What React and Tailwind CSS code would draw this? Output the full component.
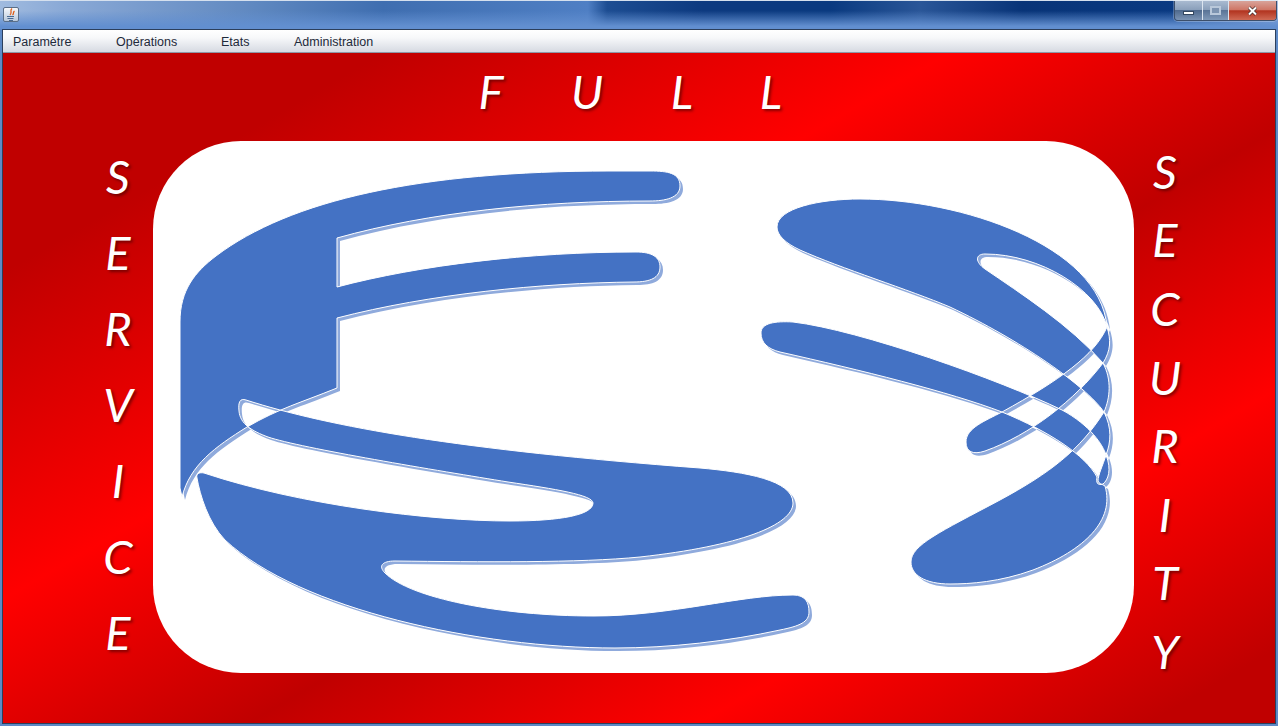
// Java Swing window: aero title bar, menu bar and the red home panel with the logo
const MENU = [
  { label: "Paramètre", width: "w-[103px]" },
  { label: "Opérations", width: "w-[105px]" },
  { label: "Etats", width: "w-[73px]" },
  { label: "Administration", width: "w-auto" },
]

const LEFT_WORD = ["S", "E", "R", "V", "I", "C", "E"]
const RIGHT_WORD = ["S", "E", "C", "U", "R", "I", "T", "Y"]

// F and the lower swoosh share one path, where they overlap even-odd leaves the small white loop
const LEFT_MARK =
  "M182 497L180 488L180 322C180 290 195 272 216 256C290 200 420 171 610 171L650 171C668 171 680 173 680 186C680 198 665 201 650 201C540 201 430 212 337 238L337 287C420 265 530 252 636 252C652 252 660 257 660 267C660 278 650 282 634 282C540 283 430 294 337 318L337 388C300 403 280 408 247 427C215 447 190 465 182 497Z" +
  "M246 400C330 427 460 450 700 468C745 472 793 480 793 503C793 525 740 546 640 557C580 563 480 562 395 561C382 561 378 566 385 573C410 598 500 616 594 616C670 616 740 595 793 595C806 595 809 603 809 612C809 622 800 626 780 630C730 641 670 648 615 648C480 648 300 610 225 540C208 522 200 495 197 478C196 474 199 472 204 473C300 505 430 521 510 521C560 521 593 515 593 503C593 495 555 489 508 482C440 471 300 448 268 437C252 431 240 424 239 411C238 402 240 398 246 400Z"

const RIGHT_MARK =
  "M777 227C777 208 820 199 860 199C960 199 1100 245 1107 327C1098 290 1040 254 985 254C975 254 975 262 985 269C1020 293 1070 325 1103 363C1112 380 1110 398 1104 412C1085 385 1020 340 950 307C910 290 840 268 800 250C785 243 777 235 777 227Z" +
  "M1107 327C1095 355 1060 380 1002 412C985 421 966 428 966 442C966 452 973 455 985 451C1030 435 1075 400 1103 363C1111 350 1111 340 1107 327Z" +
  "M761 333C761 323 775 321 793 322C860 330 1000 380 1062 410C1090 425 1103 445 1106 455C1112 470 1108 480 1103 484C1097 486 1096 482 1097 477C1085 455 1050 432 1002 412C950 392 860 370 780 352C768 349 761 343 761 333Z" +
  "M911 562C911 545 940 532 1000 500C1050 473 1080 450 1104 412C1112 428 1111 442 1106 455C1103 465 1098 475 1098 481C1099 484 1102 484 1105 486C1115 520 1085 550 1033 570C1000 582 970 584 950 584C925 584 911 575 911 562Z"

function Mark({ d }) {
  return (
    <>
      <path d={d} fill="#8faadc" fillRule="evenodd" transform="translate(3 3)" />
      <path d={d} fill="#4472c4" fillRule="evenodd" stroke="#ffffff" strokeWidth="1" />
    </>
  )
}

function Letter({ children, className }) {
  return (
    <span className={`flex items-center justify-center text-[47px] leading-none italic text-white [text-shadow:2px_2px_3px_rgba(60,0,0,0.6)] ${className}`}>
      {children}
    </span>
  )
}

export default function App() {
  return (
    <div className="flex h-[726px] w-[1278px] flex-col overflow-hidden bg-[#5d89c6] font-['Liberation_Sans',sans-serif]">
      {/* title bar */}
      <div className="flex h-[29px] shrink-0 items-start justify-between border-t border-[#d5e0ee] bg-[linear-gradient(180deg,rgba(98,143,208,0)_35%,#628fd0_90%),linear-gradient(90deg,#a0bbdf_0%,#8aa9d6_5%,#5f88c0_20%,#3f6eb0_30%,#4f7fc4_46%,#1d4d92_47.5%,#0d3a80_55%,#0a3a80_65%,#2a5698_72%,#083478_80%,#0a3a82_92%,#8faad8_100%)]">
        <div className="ml-[3px] mt-[6px] flex h-[15px] w-[16px] items-center justify-center rounded-[2px] border border-[#5b6f88] bg-[linear-gradient(180deg,#f6f8fb,#b9c9dc)]">
          <svg viewBox="0 0 14 13" className="h-[13px] w-[14px]">
            <path d="M8 0.5C5 3 9 4 6 7M10.5 3C8.5 4.5 10.5 5.5 8.5 7" fill="none" stroke="#e0601a" strokeWidth="1.3" />
            <path d="M3 8.5h7M3.5 10.5h6M5 12.5h4" stroke="#4a6a92" strokeWidth="1" />
          </svg>
        </div>
        <div className="mr-[1px] flex h-[20px] overflow-hidden rounded-b-[4px] border border-t-0 border-[#3c4f6b] shadow-[0_0_0_1px_rgba(255,255,255,0.25)]">
          <div className="flex w-[28px] items-center justify-center border-r border-[#dbe4ef] bg-[linear-gradient(180deg,#a9bad0_0%,#8ba0bb_45%,#4f6a8e_50%,#7b93b3_100%)]">
            <span className="mt-[4px] h-[4px] w-[11px] border border-[#33465f] bg-white" />
          </div>
          <div className="flex w-[26px] items-center justify-center border-r border-[#dbe4ef] bg-[linear-gradient(180deg,#a9bad0_0%,#8ba0bb_45%,#5a7497_50%,#8099b8_100%)]">
            <span className="h-[9px] w-[11px] border-2 border-[#b9c8da] bg-[#7d94b1]" />
          </div>
          <div className="flex w-[47px] items-center justify-center bg-[linear-gradient(180deg,#d8a39a_0%,#cf7767_45%,#b23420_52%,#cf6a55_100%)]">
            <svg viewBox="0 0 11 10" className="h-[10px] w-[11px]">
              <path d="M2 1.5 9 8.5M9 1.5 2 8.5" stroke="#3f2a2a" strokeWidth="3.4" />
              <path d="M2 1.5 9 8.5M9 1.5 2 8.5" stroke="#ffffff" strokeWidth="2" />
            </svg>
          </div>
        </div>
      </div>

      {/* window content */}
      <div className="mx-[2px] mb-[2px] flex min-h-0 flex-1 flex-col border border-[#2c3f5c]">
        <nav className="flex h-[23px] shrink-0 items-center border-b border-[#8e97a6] bg-[linear-gradient(180deg,#ffffff_0%,#f7f8fa_35%,#d6dae2_100%)] pl-[10px] pt-[2px] text-[12.5px] text-[#1e2a3a]">
          {MENU.map((item) => (
            <span key={item.label} className={item.width}>
              {item.label}
            </span>
          ))}
        </nav>

        <main className="flex min-h-0 flex-1 flex-col bg-[linear-gradient(150deg,#c00000_0px,#c00000_190px,#ff0000_473px,#c00000_703px,#ff0000_928px,#c00000_1153px)] font-['Lato',sans-serif]">
          <div className="flex h-[88px] shrink-0 items-center pb-[12px] pl-[441px]">
            <Letter className="w-[94px]">F</Letter>
            <Letter className="w-[98px]">U</Letter>
            <Letter className="w-[92px]">L</Letter>
            <Letter className="w-[86px]">L</Letter>
          </div>

          <div className="flex">
            <div className="-mt-[3px] flex w-[150px] shrink-0 flex-col pl-[100px]">
              {LEFT_WORD.map((l, i) => (
                <Letter key={i} className="h-[76px] w-[30px]">
                  {l}
                </Letter>
              ))}
            </div>

            <div className="h-[532px] w-[981px] shrink-0 rounded-[88px] bg-white">
              <svg viewBox="153 141 981 532" className="h-full w-full">
                <Mark d={LEFT_MARK} />
                <Mark d={RIGHT_MARK} />
              </svg>
            </div>

            <div className="-mt-[4px] flex flex-1 flex-col items-start pl-[16px]">
              {RIGHT_WORD.map((l, i) => (
                <Letter key={i} className="h-[68.6px] w-[30px]">
                  {l}
                </Letter>
              ))}
            </div>
          </div>
        </main>
      </div>
    </div>
  )
}
